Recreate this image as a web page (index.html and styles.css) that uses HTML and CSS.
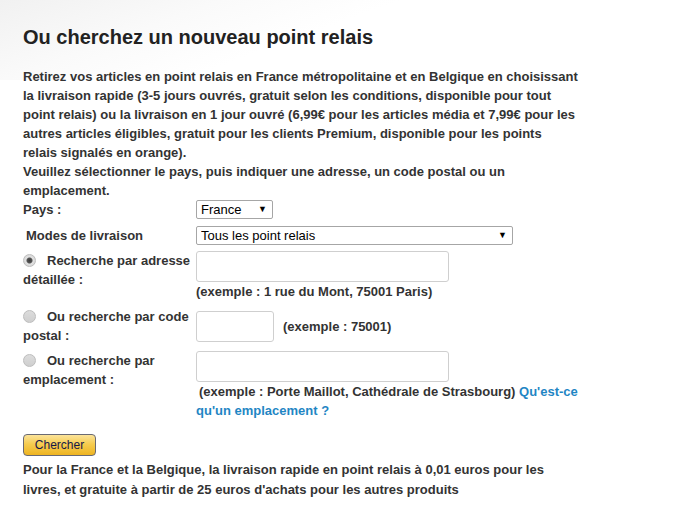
FILE: index.html
```html
<!doctype html>
<html lang="fr">
<head>
    <meta charset="utf-8">
    <title>Point relais</title>
    <link rel="stylesheet" href="styles.css">
</head>
<body>

    <div class="Page">

        <h1 class="Title">Ou cherchez un nouveau point relais</h1>

        <p class="Intro">
            Retirez vos articles en point relais en France métropolitaine et en Belgique en choisissant
            la livraison rapide (3-5 jours ouvrés, gratuit selon les conditions, disponible pour tout
            point relais) ou la livraison en 1 jour ouvré (6,99€ pour les articles média et 7,99€ pour les
            autres articles éligibles, gratuit pour les clients Premium, disponible pour les points
            relais signalés en orange).<br>
            Veuillez sélectionner le pays, puis indiquer une adresse, un code postal ou un
            emplacement.
        </p>

        <form class="Search" onsubmit="return false;">

            <!-- pays -->
            <label class="Label">Pays :</label>
            <div class="Field Field-tall">
                <span class="Select Select-small">
                    <select><option>France</option><option>Belgique</option></select>
                </span>
            </div>

            <!-- modes -->
            <label class="Label Label-indent">Modes de livraison</label>
            <div class="Field">
                <span class="Select Select-wide">
                    <select><option>Tous les point relais</option></select>
                </span>
            </div>

            <!-- adresse -->
            <label class="Label"><input class="Radio" type="radio" name="mode" checked>Recherche par adresse détaillée :</label>
            <div class="Field">
                <input class="TextInput" type="text">
                <div class="Hint">(exemple : 1 rue du Mont, 75001 Paris)</div>
            </div>

            <!-- code postal -->
            <label class="Label"><input class="Radio" type="radio" name="mode">Ou recherche par code postal :</label>
            <div class="Field Field-inline">
                <input class="TextInput TextInput-short" type="text">
                <span class="Hint">(exemple : 75001)</span>
            </div>

            <!-- emplacement -->
            <label class="Label"><input class="Radio" type="radio" name="mode">Ou recherche par emplacement :</label>
            <div class="Field">
                <input class="TextInput" type="text">
                <div class="Hint Hint-shift"><span>(exemple : Porte Maillot, Cathédrale de Strasbourg)</span> <a class="Link" href="#">Qu'est-ce qu'un emplacement ?</a></div>
            </div>

        </form>

        <button class="Button" type="button">Chercher</button>

        <p class="Footnote">
            Pour la France et la Belgique, la livraison rapide en point relais à 0,01 euros pour les
            livres, et gratuite à partir de 25 euros d'achats pour les autres produits
        </p>

    </div>

</body>
</html>
```

FILE: styles.css
```css
*, *:before, *:after {
    box-sizing: border-box;
    margin: 0;
    padding: 0;
}

html, body {
    height: 100%;
}

body {
    background: linear-gradient(160deg, #f1f1f1 0%, #fafafa 25%, #ffffff 45%);
    background-repeat: no-repeat;
    background-size: 100% 80px;
    background-color: #fff;
    color: #333;
    font-family: "Liberation Sans", Arial, sans-serif;
    font-size: 13px;
    font-weight: bold;
}

.Page {
    width: 590px;
    padding: 25px 0 0 23px;
}

.Title {
    color: #222;
    font-size: 20px;
    line-height: 24px;
    margin-bottom: 18px;
}

.Intro {
    width: 556px;
    line-height: 19px;
}

.Search {
    display: grid;
    grid-template-columns: 173px 1fr;
    row-gap: 6px;
}

.Label {
    line-height: 19px;
}

.Label-indent {
    padding-left: 3px;
}

.Field {
    line-height: 19px;
}

.Field-tall {
    min-height: 20px;
}

.Field-inline {
    display: flex;
    align-items: center;
    gap: 9px;
}

.Radio {
    appearance: none;
    -webkit-appearance: none;
    display: inline-block;
    width: 13px;
    height: 13px;
    margin: 0 11px 0 0;
    vertical-align: -2px;
    border: 1px solid #bdbdbd;
    border-radius: 50%;
    background: linear-gradient(#dcdcdc, #cfcfcf);
}

.Radio:checked {
    background: radial-gradient(circle, #3c3c3c 0, #555 2.5px, #e2e2e2 3.5px, #d0d0d0 100%);
}

.Select {
    position: relative;
    display: inline-block;
    vertical-align: top;
}

.Select select {
    appearance: none;
    -webkit-appearance: none;
    display: block;
    height: 19px;
    padding: 0 0 0 4px;
    border: 1px solid #a6a6a6;
    border-radius: 2px;
    background: #fff;
    color: #000;
    font-family: "Liberation Sans", Arial, sans-serif;
    font-size: 13px;
    font-weight: normal;
    line-height: 17px;
}

.Select:after {
    content: "▼";
    position: absolute;
    right: 6px;
    top: 5px;
    font-size: 9px;
    line-height: 9px;
    color: #000;
    pointer-events: none;
}

.Select-small select {
    width: 77px;
}

.Select-wide select {
    width: 317px;
}

.TextInput {
    display: block;
    width: 253px;
    height: 31px;
    border: 1px solid #cfcfcf;
    border-radius: 3px;
    background: #fff;
}

.TextInput-short {
    width: 78px;
}

.Hint {
    line-height: 19px;
}

.Hint-shift {
    text-indent: 3px;
}

.Link {
    color: #1f86c4;
    text-decoration: none;
}

.Button {
    display: block;
    width: 73px;
    height: 22px;
    margin-top: 14px;
    border: 1px solid #6a6a72;
    border-radius: 4px;
    background: linear-gradient(#fbe39a 0%, #f6cc50 45%, #eeb421 100%);
    color: #15174a;
    font-family: "Liberation Sans", Arial, sans-serif;
    font-size: 12px;
    font-weight: normal;
}

.Footnote {
    width: 560px;
    margin-top: 4px;
    line-height: 20px;
}
```
